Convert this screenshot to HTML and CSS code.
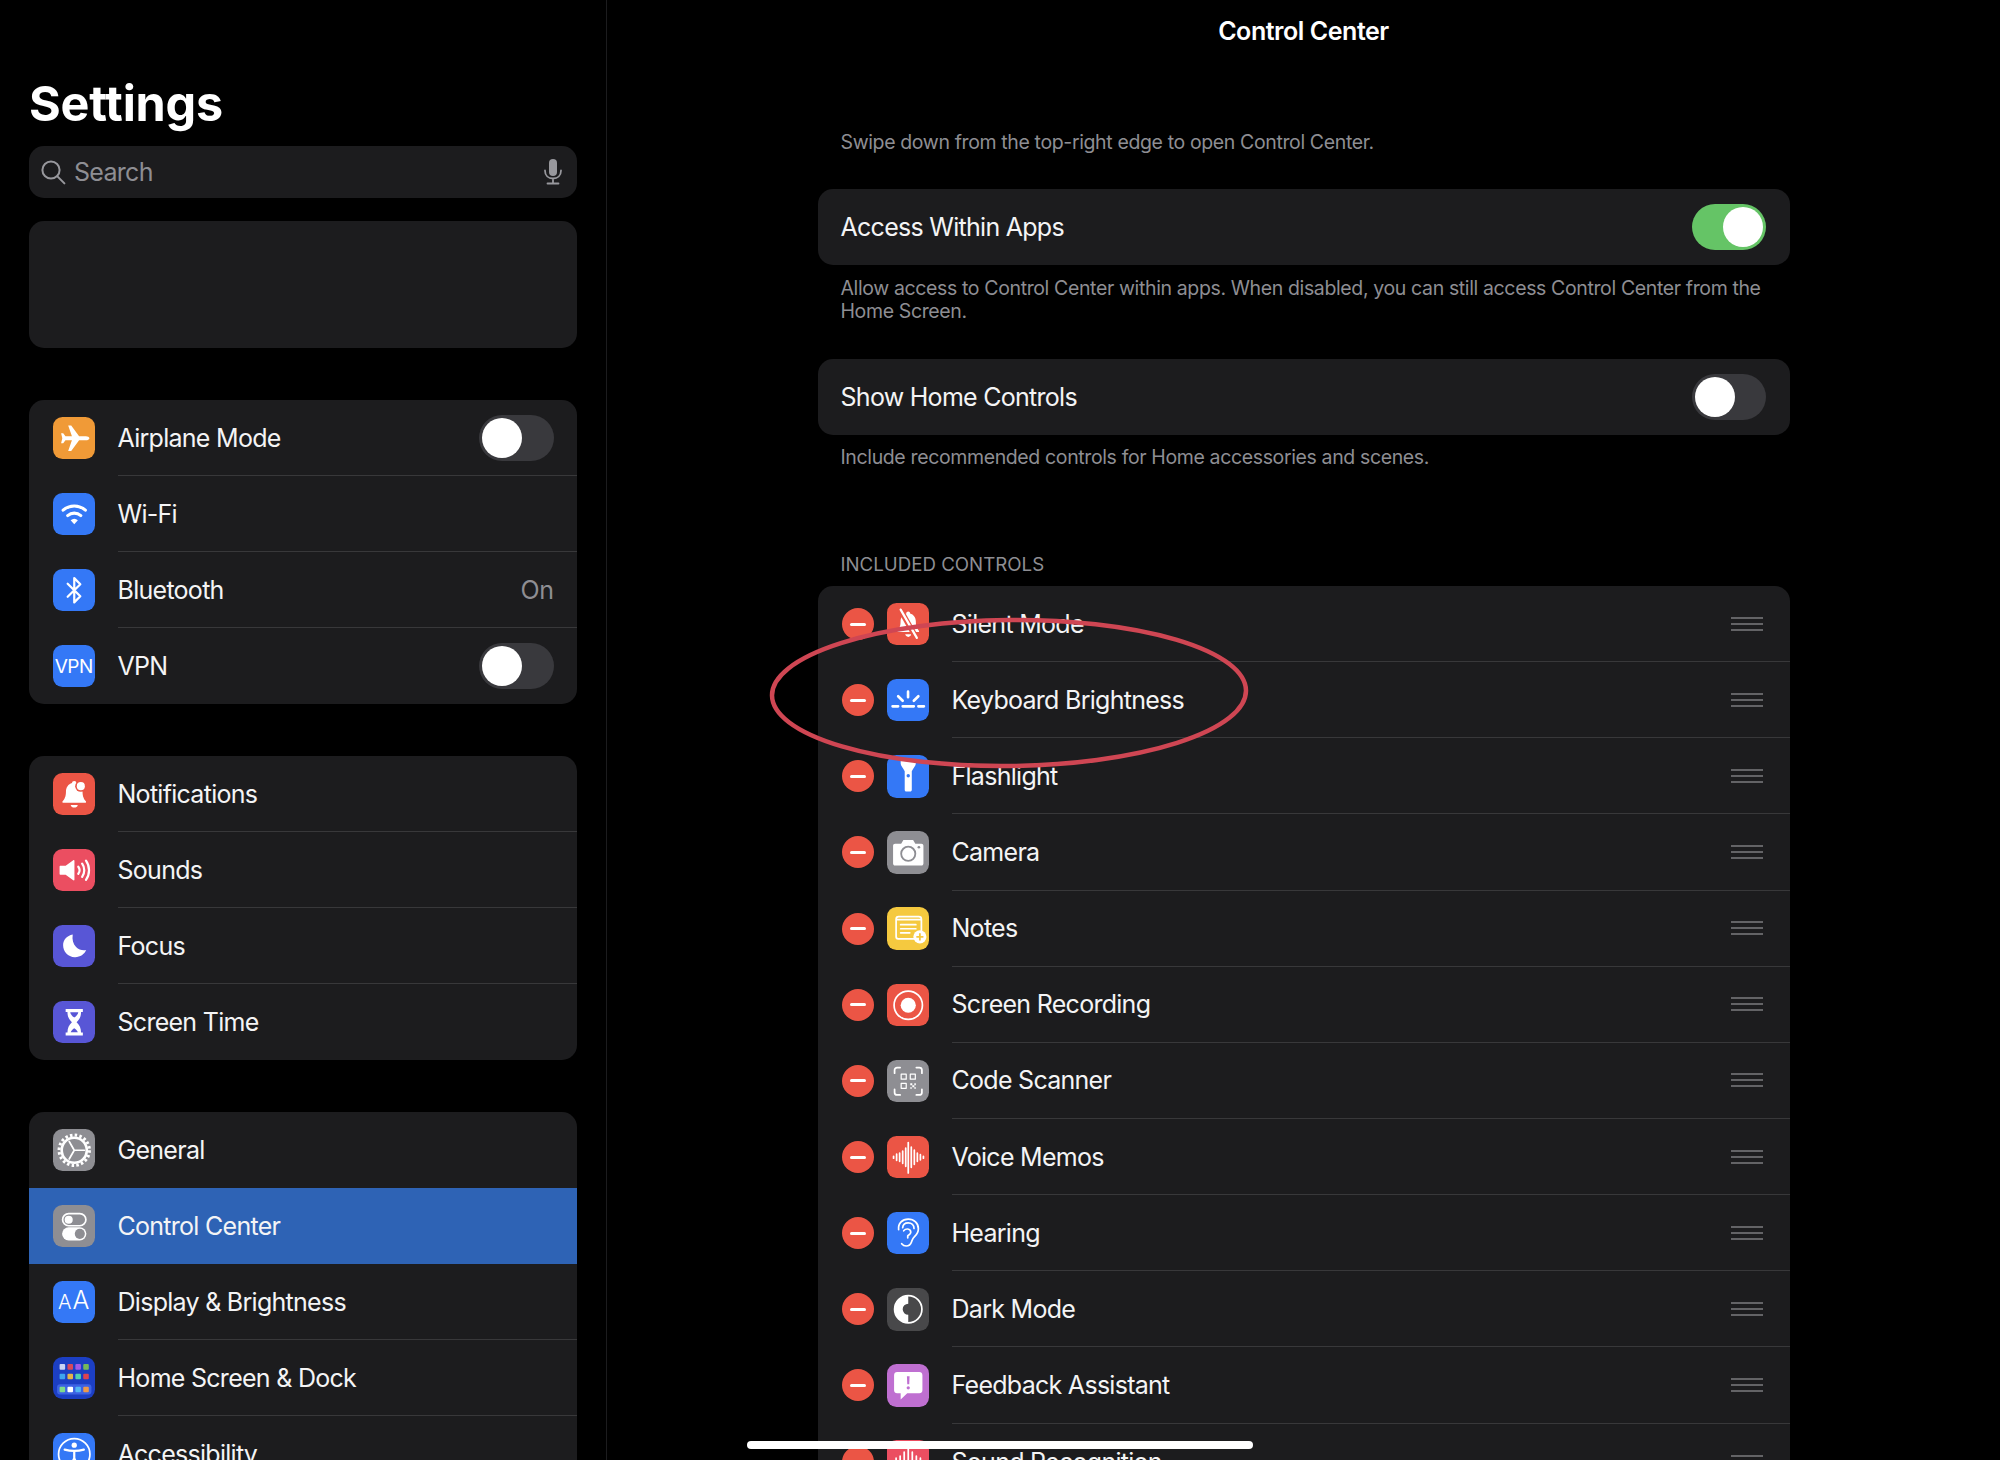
FILE: index.html
```html
<!DOCTYPE html>
<html lang="en">
<head>
<meta charset="utf-8">
<title>Control Center</title>
<link rel="stylesheet" href="styles.css">
</head>
<body>
<div class="screen">
  <aside class="sidebar">
    <h1 class="big-title">Settings</h1>
    <div class="search">
      <svg class="search-icon" viewBox="0 0 26 26"><circle cx="11" cy="11" r="8.6"/><path d="M17.4 17.4l7 7"/></svg>
      <span class="search-text">Search</span>
      <svg class="mic-icon" viewBox="0 0 20 26"><rect class="fill" x="6" y="0" width="8" height="17" rx="4"/><path d="M2 11.5c0 5 3.4 8 8 8s8-3 8-8M10 19.5v4.5M4.5 24.5h11"/></svg>
    </div>
    <div class="profile"></div>

    <div class="group">
      <div class="row">
        <span class="ico orange"><svg viewBox="0 0 42 42"><path class="w" d="M36 21c0 1.2-1.8 2-3.5 2h-6.7L18 33.5h-3l3.7-10.5h-6.4l-2.2 3H8l1.2-5L8 16h2.1l2.2 3h6.4L15 8.5h3L25.800 19h6.700c1.700 0 3.500.8 3.500 2z"/></svg></span>
        <div class="body"><span class="label">Airplane Mode</span><span class="toggle"><span class="knob"></span></span></div>
      </div>
      <div class="row">
        <span class="ico blue"><svg viewBox="0 0 42 42"><path class="w" d="M21 31l-3.600-4a5.500 5.500 0 0 1 7.200 0z"/><path class="s s3" d="M14.500 22.300a10 10 0 0 1 13 0M10 17a16.500 16.500 0 0 1 22 0"/></svg></span>
        <div class="body"><span class="label">Wi-Fi</span></div>
      </div>
      <div class="row">
        <span class="ico blue"><svg viewBox="0 0 42 42"><path class="s s2" d="M14.500 14.500L27 27l-6 6V9l6 6-12.500 12.500"/></svg></span>
        <div class="body"><span class="label">Bluetooth</span><span class="value">On</span></div>
      </div>
      <div class="row">
        <span class="ico blue vpn">VPN</span>
        <div class="body"><span class="label">VPN</span><span class="toggle"><span class="knob"></span></span></div>
      </div>
    </div>

    <div class="group">
      <div class="row">
        <span class="ico red"><svg viewBox="0 0 42 42"><path class="w" d="M21 8c1.300 0 2.200.9 2.200 2 3.700 1 6 4.500 6 8.500 0 5 1.500 7.300 3.300 9.500.5.700.2 1.500-.8 1.500H10.300c-1 0-1.300-.8-.8-1.500 1.800-2.200 3.300-4.500 3.300-9.500 0-4 2.300-7.500 6-8.500 0-1.100.9-2 2.200-2z"/><path class="w" d="M17.500 31.500h7c-.4 1.700-1.800 2.700-3.500 2.700s-3.100-1-3.500-2.700z"/><circle cx="27.500" cy="13" r="5.600" fill="#eb5545"/><circle class="w" cx="27.500" cy="13" r="4"/></svg></span>
        <div class="body"><span class="label">Notifications</span></div>
      </div>
      <div class="row">
        <span class="ico pink"><svg viewBox="0 0 42 42"><path class="w" d="M7.500 16.500h5L20 11c.6-.4 1.200 0 1.200.6v18.800c0 .6-.6 1-1.200.6l-7.500-5.500h-5c-.6 0-1-.4-1-1v-7c0-.6.4-1 1-1z"/><path class="s s2" d="M25 17.500c1.500 2 1.500 5 0 7M28.800 14.500c2.800 3.800 2.800 9.200 0 13M32.600 11.500c4 5.500 4 13.500 0 19"/></svg></span>
        <div class="body"><span class="label">Sounds</span></div>
      </div>
      <div class="row">
        <span class="ico indigo"><svg viewBox="0 0 42 42"><path class="w" d="M19.500 9.500c-.8 5 .4 9.500 3.300 12.300 2.700 2.600 6 3.600 10 3-1.800 4.300-6.300 7.200-11.300 7-6.800-.2-11.500-5.600-11.500-11.800 0-5 3.700-9.400 9.500-10.500z"/></svg></span>
        <div class="body"><span class="label">Focus</span></div>
      </div>
      <div class="row">
        <span class="ico indigo"><svg viewBox="0 0 42 42"><path class="w" d="M12.500 8h17v2.800h-1.800c0 4.500-1.400 7.300-4.400 10.200 3 2.900 4.400 5.700 4.400 10.200h1.800V34h-17v-2.800h1.800c0-4.500 1.400-7.300 4.400-10.200-3-2.900-4.400-5.700-4.400-10.200h-1.800z"/><path d="M17.500 31c.6-1.900 2-3 3.500-4 1.500 1 2.900 2.100 3.500 4z" fill="#5856d6"/><path d="M17 11h8c-.3 2-1.800 3.800-4 5.200-2.200-1.400-3.700-3.200-4-5.200z" fill="#5856d6"/></svg></span>
        <div class="body last"><span class="label">Screen Time</span></div>
      </div>
    </div>

    <div class="group">
      <div class="row">
        <span class="ico gray"><svg viewBox="0 0 42 42"><circle cx="21" cy="21" r="15" class="s teeth"/><circle cx="21" cy="21" r="12.400" class="s s25"/><path class="s s15" d="M21 21h10M21 21l-5-8.700M21 21l-5 8.700"/></svg></span>
        <div class="body plain"><span class="label">General</span></div>
      </div>
      <div class="row selected">
        <span class="ico gray"><svg viewBox="0 0 42 42"><rect class="s s15" x="9.500" y="8.500" width="23" height="12" rx="6"/><circle class="w" cx="15.500" cy="14.500" r="4"/><rect class="w" x="9" y="22" width="24" height="13" rx="6.500"/><circle cx="26.500" cy="28.500" r="5" fill="#8e8e93"/></svg></span>
        <div class="body plain"><span class="label">Control Center</span></div>
      </div>
      <div class="row">
        <span class="ico blue aa"><span class="aa-small">A</span><span class="aa-big">A</span></span>
        <div class="body"><span class="label">Display &amp; Brightness</span></div>
      </div>
      <div class="row">
        <span class="ico navy"><svg viewBox="0 0 42 42"><g class="dots"><rect x="6.500" y="7" width="5.500" height="5.500" rx="1" fill="#c9d3f5"/><rect x="14.300" y="7" width="5.500" height="5.500" rx="1" fill="#d8495c"/><rect x="22.100" y="7" width="5.500" height="5.500" rx="1" fill="#a05ae8"/><rect x="29.900" y="7" width="5.500" height="5.500" rx="1" fill="#76b85a"/><rect x="6.500" y="16.500" width="5.500" height="5.500" rx="1" fill="#3fa4ee"/><rect x="14.300" y="16.500" width="5.500" height="5.500" rx="1" fill="#e3b34a"/><rect x="22.100" y="16.500" width="5.500" height="5.500" rx="1" fill="#4fd0b0"/><rect x="29.900" y="16.500" width="5.500" height="5.500" rx="1" fill="#e0434f"/></g><rect x="4" y="27" width="34" height="10" rx="3" fill="#3c62e4"/><rect x="6.500" y="29.300" width="5.500" height="5.500" rx="1" fill="#7fdc8a"/><rect x="14.300" y="29.300" width="5.500" height="5.500" rx="1" fill="#fff"/><rect x="22.100" y="29.300" width="5.500" height="5.500" rx="1" fill="#52b6f2"/><rect x="29.900" y="29.300" width="5.500" height="5.500" rx="1" fill="#ee9a4a"/></svg></span>
        <div class="body"><span class="label">Home Screen &amp; Dock</span></div>
      </div>
      <div class="row">
        <span class="ico blue"><svg viewBox="0 0 42 42"><circle class="s s15" cx="21" cy="21" r="15.500"/><circle class="w" cx="21" cy="12" r="2.600"/><path class="s s2" d="M11.500 16.500c6.500 1.700 12.500 1.700 19 0M21 18v7.500M21 25l-4 8.500M21 25l4 8.500"/></svg></span>
        <div class="body"><span class="label">Accessibility</span></div>
      </div>
    </div>
  </aside>

  <main class="detail">
    <header class="nav">Control Center</header>
    <div class="content">
      <p class="note hint">Swipe down from the top-right edge to open Control Center.</p>
      <div class="single">
        <span class="label">Access Within Apps</span>
        <span class="toggle on"><span class="knob"></span></span>
      </div>
      <p class="note">Allow access to Control Center within apps. When disabled, you can still access Control Center from the Home Screen.</p>
      <div class="single second">
        <span class="label">Show Home Controls</span>
        <span class="toggle"><span class="knob"></span></span>
      </div>
      <p class="note">Include recommended controls for Home accessories and scenes.</p>
      <h2 class="section">INCLUDED CONTROLS</h2>
      <div class="list">
        <div class="row ctl">
          <span class="minus"></span>
          <span class="ico red"><svg viewBox="0 0 42 42"><path class="w" d="M21 8.500c1 0 1.800.8 1.800 1.800 3.500.9 5.700 4.200 5.700 8 0 4.700 1.300 6.900 3 9 .5.600.2 1.300-.6 1.300H11c-.8 0-1.100-.7-.6-1.300 1.700-2.100 3-4.300 3-9 0-3.800 2.200-7.100 5.700-8 0-1 .8-1.800 1.900-1.800z"/><path class="w" d="M18 31h6c-.3 1.500-1.500 2.500-3 2.500s-2.700-1-3-2.500z"/><path d="M12.500 5.500l17 30" stroke="#eb5545" stroke-width="5.500" fill="none"/><path class="s s2" d="M13.500 6.500l16 28"/></svg></span>
          <div class="body"><span class="label">Silent Mode</span><span class="grip"></span></div>
        </div>
        <div class="row ctl">
          <span class="minus"></span>
          <span class="ico blue"><svg viewBox="0 0 42 42"><path class="s s2r" d="M20.800 12.500v5.500M11 17l4.500 4.500M31 17l-4.500 4.500M5.500 27h5.500M15.500 27h11M31 27h5.500"/></svg></span>
          <div class="body"><span class="label">Keyboard Brightness</span><span class="grip"></span></div>
        </div>
        <div class="row ctl">
          <span class="minus"></span>
          <span class="ico blue"><svg viewBox="0 0 42 42"><path class="w" d="M13.500 6h15v2.500c0 2-2.500 5-4 7.500v18.500c0 .8-.7 1.500-1.500 1.500h-4c-.8 0-1.500-.7-1.500-1.500V16c-1.500-2.500-4-5.500-4-7.500z"/><circle cx="21" cy="20.500" r="1.700" fill="#3478f6"/></svg></span>
          <div class="body"><span class="label">Flashlight</span><span class="grip"></span></div>
        </div>
        <div class="row ctl">
          <span class="minus"></span>
          <span class="ico gray"><svg viewBox="0 0 42 42"><path class="w" d="M8 12.500h6l2.200-3.500h9.600l2.200 3.500h6c1.200 0 2 .8 2 2V32c0 1.200-.8 2-2 2H8c-1.200 0-2-.8-2-2V14.500c0-1.200.8-2 2-2z"/><circle cx="21" cy="22.500" r="7" fill="none" stroke="#8e8e93" stroke-width="1.800"/><circle cx="31.500" cy="16" r="1.300" fill="#8e8e93"/></svg></span>
          <div class="body"><span class="label">Camera</span><span class="grip"></span></div>
        </div>
        <div class="row ctl">
          <span class="minus"></span>
          <span class="ico yellow"><svg viewBox="0 0 42 42"><path class="s s15" d="M9 12.500h25M28 31.500H11c-1.200 0-2-.8-2-2V12c0-1.500 1-2.500 2.500-2.500h20c1.500 0 2.500 1 2.500 2.500v11M13.500 17.500h15M13.500 21.500h15M13.500 25.500h9"/><circle class="w" cx="32.500" cy="29.500" r="6.500"/><path d="M32.500 26v7M29 29.500h7" stroke="#f5c93f" stroke-width="1.800"/></svg></span>
          <div class="body"><span class="label">Notes</span><span class="grip"></span></div>
        </div>
        <div class="row ctl">
          <span class="minus"></span>
          <span class="ico red"><svg viewBox="0 0 42 42"><circle class="s s15" cx="21" cy="21" r="14"/><circle class="w" cx="21" cy="21" r="7.500"/></svg></span>
          <div class="body"><span class="label">Screen Recording</span><span class="grip"></span></div>
        </div>
        <div class="row ctl">
          <span class="minus"></span>
          <span class="ico gray"><svg viewBox="0 0 42 42"><path class="s s15" d="M7.500 13V10c0-1.500 1-2.500 2.500-2.500h3M29 7.500h3c1.500 0 2.500 1 2.500 2.500v3M7.500 29v3c0 1.500 1 2.500 2.500 2.500h3M29 34.500h3c1.500 0 2.500-1 2.500-2.500v-3"/><path class="s s12" d="M14 14h5v5h-5zM23 14h5v5h-5zM14 23h5v5h-5z"/><path class="w" d="M23 23h2v2h-2zM27 23h1.500v2H27zM25 25h2v2h-2zM23 27h1.500v1.500H23zM27 27h1.500v1.500H27z"/></svg></span>
          <div class="body"><span class="label">Code Scanner</span><span class="grip"></span></div>
        </div>
        <div class="row ctl">
          <span class="minus"></span>
          <span class="ico red"><svg viewBox="0 0 42 42"><path class="s s15" d="M6.500 20v2M9.500 18v6M12.500 17v8M15.500 15v12M18.500 12v18M21 6.500v30M24 11v20M27 14v14M30 17v8M33 18.500v5M36 20v2"/></svg></span>
          <div class="body"><span class="label">Voice Memos</span><span class="grip"></span></div>
        </div>
        <div class="row ctl">
          <span class="minus"></span>
          <span class="ico blue"><svg viewBox="0 0 42 42"><path class="s s15" d="M11.500 17.500C10.700 11.500 15 7 21 7c5.800 0 10 4 10 9.500 0 3.500-1.500 5.700-3.800 7.800-2 1.800-2.200 3.300-3 5.300-.8 2.400-2.500 4-5.200 4-2 0-3.500-1-4.500-2.300"/><path class="s s15" d="M15.500 15.500c.2-3 2.500-4.800 5.500-4.800 3.300 0 5.700 2.300 5.700 5.600"/><path class="s s15" d="M16.500 18.500c1-1.200 2.500-1.800 4-1.700 1.900.2 3 1.500 3 3.200 0 2-2 2.500-3 3.500v2"/></svg></span>
          <div class="body"><span class="label">Hearing</span><span class="grip"></span></div>
        </div>
        <div class="row ctl">
          <span class="minus"></span>
          <span class="ico dark"><svg viewBox="0 0 42 42"><circle class="s s15" cx="21" cy="21" r="13.500"/><path class="w" d="M21 7.500a13.500 13.500 0 0 0 0 27v-8a5.500 5.500 0 0 1 0-11z"/></svg></span>
          <div class="body"><span class="label">Dark Mode</span><span class="grip"></span></div>
        </div>
        <div class="row ctl">
          <span class="minus"></span>
          <span class="ico purple"><svg viewBox="0 0 42 42"><path class="w" d="M10 8h22c1.700 0 3 1.300 3 3v15c0 1.700-1.300 3-3 3H20l-6.500 6v-6H10c-1.700 0-3-1.300-3-3V11c0-1.700 1.300-3 3-3z"/><path d="M19.700 12h2.600l-.3 8h-2z" fill="#bf6fd1"/><circle cx="21" cy="23.500" r="1.600" fill="#bf6fd1"/></svg></span>
          <div class="body"><span class="label">Feedback Assistant</span><span class="grip"></span></div>
        </div>
        <div class="row ctl">
          <span class="minus"></span>
          <span class="ico pink"><svg viewBox="0 0 42 42"><path class="s s15" d="M9 18v6M13 16v10M17 12v18M21 8v26M25 12v18M29 16v10M33 18v6"/></svg></span>
          <div class="body"><span class="label">Sound Recognition</span><span class="grip"></span></div>
        </div>
      </div>
    </div>
  </main>

  <svg class="ring" viewBox="0 0 490 165"><ellipse cx="244" cy="83" rx="237" ry="73" transform="rotate(-0.6 244 83)"/></svg>
  <div class="home-bar"></div>
</div>
</body>
</html>
```
FILE: styles.css
```css
* { box-sizing: border-box; }
html, body { margin: 0; padding: 0; background: #000; }
body { font-family: Inter, "Noto Sans", "Liberation Sans", sans-serif; color: #f4f4f5; }

.screen { position: relative; display: flex; width: 2000px; height: 1460px; overflow: hidden; background: #000; }

/* Sidebar */
.sidebar { flex: 0 0 607px; height: 1460px; overflow: hidden; padding: 75px 29.500px 0 29px; border-right: 1px solid #1c1c1e; }
.big-title { margin: 0 0 13px; font-size: 48.500px; line-height: 58px; font-weight: 700; color: #fff; letter-spacing: -0.2px; }
.search { display: flex; align-items: center; height: 52px; padding: 0 14px 0 11px; background: #1c1c1e; border-radius: 15px; }
.search-icon { width: 26px; height: 26px; fill: none; stroke: #98989d; stroke-width: 2; stroke-linecap: round; }
.search-text { flex: 1; margin-left: 8px; font-size: 25px; letter-spacing: -0.7px; color: #8e8e93; }
.mic-icon { width: 20px; height: 26px; fill: none; stroke: #98989d; stroke-width: 1.800; stroke-linecap: round; }
.mic-icon .fill { fill: #98989d; stroke: none; }
.profile { height: 127px; margin-top: 23px; background: #1c1c1e; border-radius: 15px; }
.group { margin-top: 52px; background: #1c1c1e; border-radius: 15px; overflow: hidden; }

/* Rows */
.row { display: flex; align-items: center; height: 76px; padding-left: 23.500px; }
.row.selected { background: #2e63b5; }
.row .body { flex: 1; display: flex; align-items: center; justify-content: space-between; height: 100%; margin-left: 22.500px; padding-right: 23px; border-bottom: 1px solid #38383a; }
.row:last-child .body, .row .body.last, .row .body.plain { border-bottom: none; }
.label { font-size: 25px; line-height: 30px; letter-spacing: -0.72px; color: #f4f4f5; }
.value { font-size: 25px; letter-spacing: -0.5px; color: #8e8e93; }

/* Icons */
.ico { flex: 0 0 42.500px; display: flex; align-items: center; justify-content: center; width: 42.500px; height: 42.500px; border-radius: 9.500px; color: #fff; }
.ico svg { display: block; width: 42.500px; height: 42.500px; }
.orange { background: #f09a37; }
.blue { background: #3478f6; }
.red { background: #eb5545; }
.pink { background: #eb4e61; }
.indigo { background: #5856d6; }
.gray { background: #8e8e93; }
.navy { background: #1c3fc4; }
.yellow { background: #f5c93f; }
.dark { background: #48484a; }
.purple { background: #bf6fd1; }
.w { fill: #fff; }
.s { fill: none; stroke: #fff; stroke-linecap: round; stroke-linejoin: round; }
.s12 { stroke-width: 1.200; }
.s15 { stroke-width: 1.700; }
.s2 { stroke-width: 2.200; }
.s2r { stroke-width: 2.600; }
.s25 { stroke-width: 2.600; }
.s3 { stroke-width: 3; }
.teeth { stroke-width: 3; stroke-linecap: butt; stroke-dasharray: 2.500 2.210; }
.vpn { font-size: 19px; letter-spacing: -0.6px; }
.aa { align-items: baseline; padding-top: 4px; gap: 1px; font-weight: 300; }
.aa-small { font-size: 20px; }
.aa-big { font-size: 25px; }

/* Toggles */
.toggle { display: flex; align-items: center; justify-content: flex-start; width: 74.500px; height: 46px; padding: 3px; background: #39393d; border-radius: 23px; }
.toggle.on { justify-content: flex-end; background: #65c466; }
.knob { width: 40px; height: 40px; background: #fff; border-radius: 50%; }

/* Detail pane */
.detail { flex: 1; min-width: 0; height: 1460px; overflow: hidden; }
.nav { height: 62px; line-height: 62px; text-align: center; font-size: 25px; font-weight: 600; letter-spacing: -0.45px; color: #fff; }
.content { padding: 69px 210.500px 0; }
.note { margin: 11.500px 23px 0; font-size: 19.500px; line-height: 23.500px; letter-spacing: -0.37px; color: #8e8e93; }
.note.hint { margin-top: 0; margin-bottom: 34.500px; }
.single { display: flex; align-items: center; justify-content: space-between; height: 76px; padding: 0 23.500px 0 23px; background: #1c1c1e; border-radius: 15px; }
.single.second { margin-top: 35px; }
.section { margin: 83px 23px 9px; font-size: 18.700px; line-height: 24px; font-weight: 400; color: #8e8e93; }
.list { padding-top: 0.500px; background: #1c1c1e; border-radius: 15px; overflow: hidden; }
.row.ctl { height: 76.150px; padding-left: 24px; }
.row.ctl .ico { margin-left: 13px; }
.row.ctl .body { padding-right: 27px; }
.minus { position: relative; flex: 0 0 32px; width: 32px; height: 32px; background: #eb5545; border-radius: 50%; }
.minus::after { content: ""; position: absolute; left: 8px; top: 14.500px; width: 16px; height: 3px; background: #fff; border-radius: 2px; }
.grip { width: 32px; height: 14px; border-top: 2px solid #636366; border-bottom: 2px solid #636366; background: linear-gradient(#636366, #636366) center / 100% 2px no-repeat; }

/* Overlays */
.ring { position: absolute; left: 765px; top: 610px; width: 490px; height: 165px; fill: none; stroke: #cf4653; stroke-width: 4.500; }
.home-bar { position: absolute; left: 747px; top: 1441px; width: 506px; height: 8px; background: #fff; border-radius: 4px; }
```
